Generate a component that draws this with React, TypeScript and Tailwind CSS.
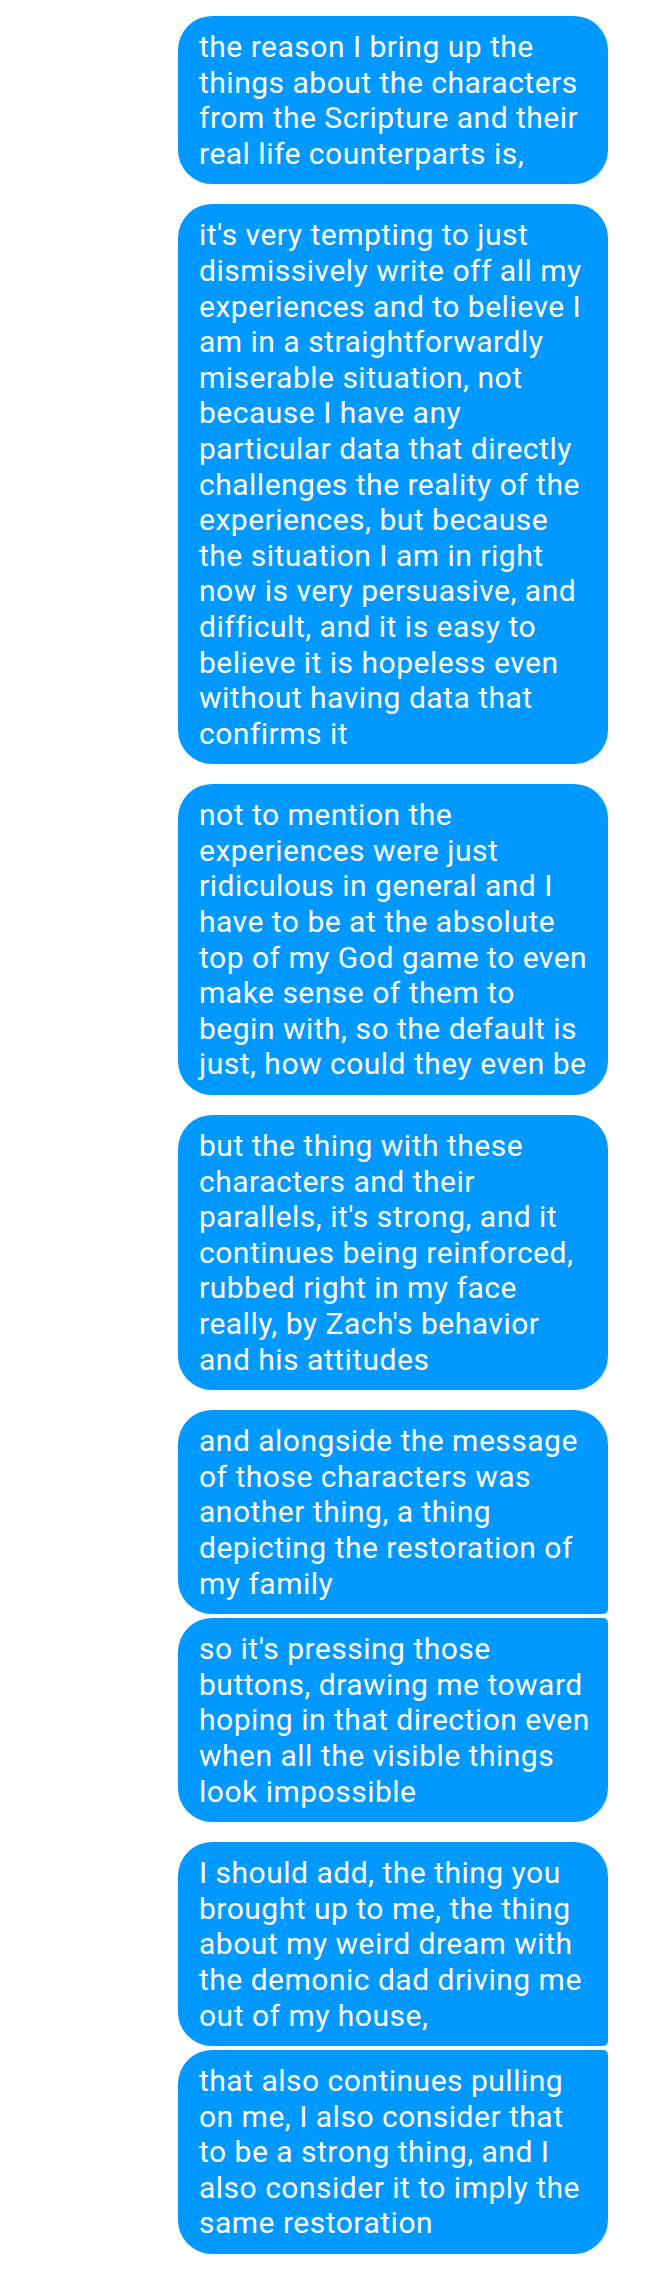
import React from 'react';

type Msg = {
  lines: string[];
  // joined to the next / previous bubble (small corner between them)
  joinNext?: boolean;
  joinPrev?: boolean;
};

const messages: Msg[] = [
  {
    lines: [
      'the reason I bring up the',
      'things about the characters',
      'from the Scripture and their',
      'real life counterparts is,',
    ],
  },
  {
    lines: [
      "it's very tempting to just",
      'dismissively write off all my',
      'experiences and to believe I',
      'am in a straightforwardly',
      'miserable situation, not',
      'because I have any',
      'particular data that directly',
      'challenges the reality of the',
      'experiences, but because',
      'the situation I am in right',
      'now is very persuasive, and',
      'difficult, and it is easy to',
      'believe it is hopeless even',
      'without having data that',
      'confirms it',
    ],
  },
  {
    lines: [
      'not to mention the',
      'experiences were just',
      'ridiculous in general and I',
      'have to be at the absolute',
      'top of my God game to even',
      'make sense of them to',
      'begin with, so the default is',
      'just, how could they even be',
    ],
  },
  {
    lines: [
      'but the thing with these',
      'characters and their',
      "parallels, it's strong, and it",
      'continues being reinforced,',
      'rubbed right in my face',
      "really, by Zach's behavior",
      'and his attitudes',
    ],
  },
  {
    lines: [
      'and alongside the message',
      'of those characters was',
      'another thing, a thing',
      'depicting the restoration of',
      'my family',
    ],
    joinNext: true,
  },
  {
    lines: [
      "so it's pressing those",
      'buttons, drawing me toward',
      'hoping in that direction even',
      'when all the visible things',
      'look impossible',
    ],
    joinPrev: true,
  },
  {
    lines: [
      'I should add, the thing you',
      'brought up to me, the thing',
      'about my weird dream with',
      'the demonic dad driving me',
      'out of my house,',
    ],
    joinNext: true,
  },
  {
    lines: [
      'that also continues pulling',
      'on me, I also consider that',
      'to be a strong thing, and I',
      'also consider it to imply the',
      'same restoration',
    ],
    joinPrev: true,
  },
];

function Bubble({ msg }: { msg: Msg }) {
  return (
    <div
      className={`w-[430px] bg-[#0099ff] text-white px-[21px] py-[13px] rounded-[34px] ${
        msg.joinNext ? 'rounded-br-[5px]' : ''
      } ${msg.joinPrev ? 'rounded-tr-[5px]' : ''}`}
    >
      {msg.lines.map((line, i) => (
        <div key={i} className="whitespace-nowrap text-[30px] leading-[35.6px] tracking-[0.5px]">
          {line}
        </div>
      ))}
    </div>
  );
}

export default function App() {
  return (
    <div
      className="w-[648px] min-h-[2270px] bg-white pt-[16px] pr-[40px] flex flex-col items-end"
      style={{ fontFamily: 'Roboto, "Noto Sans", sans-serif' }}
    >
      {messages.map((m, i) => (
        <div key={i} className={i === 0 ? '' : m.joinPrev ? 'mt-[4px]' : 'mt-[20px]'}>
          <Bubble msg={m} />
        </div>
      ))}
    </div>
  );
}
